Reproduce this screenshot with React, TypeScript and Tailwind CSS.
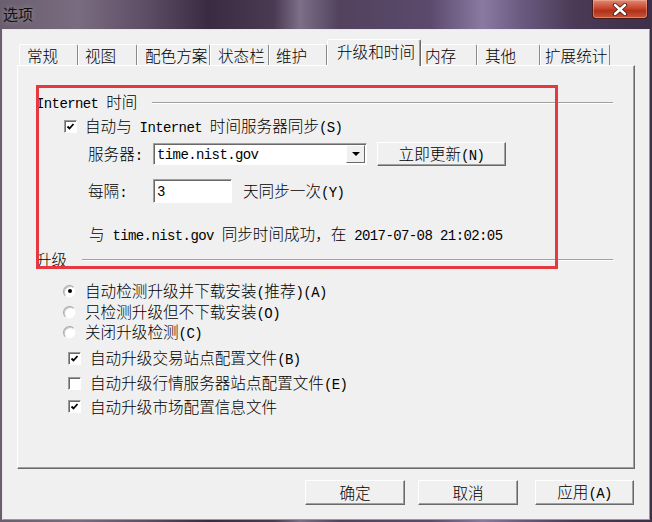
import clsx from "clsx";

// mixed text: CJK runs in Noto Sans CJK, ascii runs in a half-width mono
function Txt({ s, className }: { s: string; className?: string }) {
  const parts = s.match(/[\x00-\x7F]+|[^\x00-\x7F]+/g) ?? [];
  return (
    <span className={clsx("whitespace-pre text-[15.6px] leading-[16px] text-black", className)}>
      {parts.map((p, i) =>
        /^[\x00-\x7F]/.test(p) ? (
          <span key={i} className="font-['Liberation_Mono',monospace] text-[14px] tracking-[-0.6px]">
            {p}
          </span>
        ) : (
          <span key={i} className="font-['Noto_Sans_CJK_SC',sans-serif] font-light">
            {p}
          </span>
        )
      )}
    </span>
  );
}

function Check({ on }: { on?: boolean }) {
  return (
    <span className="flex h-[13px] w-[13px] shrink-0 items-center justify-center border border-[#9a9a9a] border-b-white border-r-white bg-white shadow-[inset_1px_1px_0_#6a6a6a]">
      {on && (
        <svg width="9" height="9" viewBox="0 0 9 9">
          <polyline points="1.5,4.5 3.5,6.5 7.5,2" fill="none" stroke="#000" strokeWidth="1.8" />
        </svg>
      )}
    </span>
  );
}

function Radio({ on }: { on?: boolean }) {
  return (
    <span className="flex h-[13px] w-[13px] shrink-0 items-center justify-center rounded-full border border-[#a8a8a8] border-b-[#f4f4f4] border-r-[#f4f4f4] bg-white shadow-[inset_1px_1px_0_#c8c8c8]">
      {on && <span className="h-[4px] w-[4px] rounded-full bg-black" />}
    </span>
  );
}

function Btn({ label, className }: { label: string; className?: string }) {
  return (
    <div
      className={clsx(
        "flex items-center justify-center border border-[#f0f0f0] border-l-white border-t-white border-b-[#696969] border-r-[#696969] bg-[#f0f0f0] shadow-[inset_-1px_-1px_0_#a0a0a0]",
        className
      )}
    >
      <Txt s={label} />
    </div>
  );
}

function Etch({ className }: { className?: string }) {
  return <div className={clsx("h-[2px] flex-1 border-t border-b border-t-[#a0a0a0] border-b-white", className)} />;
}

const tabs = [
  { label: "常规", cls: "w-[59px] pl-[7px]" },
  { label: "视图", cls: "w-[59px] pl-[6px]" },
  { label: "配色方案", cls: "w-[73px] pl-[7px]" },
  { label: "状态栏", cls: "w-[59px] pl-[7px]" },
  { label: "维护", cls: "w-[58px] pl-[6px]" },
  { label: "升级和时间", cls: "w-[94px] pl-[9px]", active: true },
  { label: "内存", cls: "w-[56px] pl-[3px]" },
  { label: "其他", cls: "w-[63px] pl-[7px]" },
  { label: "扩展统计", cls: "w-[70px] pl-[4px]" }
];

export default function App() {
  return (
    <div className="relative flex h-[522px] w-[652px] flex-col overflow-hidden bg-[linear-gradient(90deg,#6a5e6e_0%,#7a6c80_12%,#5e4e66_22%,#3a2b42_32%,#4a3a52_42%,#7d6f88_46%,#52425e_52%,#5b4a6c_66%,#8a7aa2_74%,#6a5a80_80%,#4a3a56_88%,#3e3048_100%)]">
      {/* title bar */}
      <div className="flex h-[29px] shrink-0 items-start justify-between">
        <span className="mt-[4px] ml-[3px] font-['Noto_Sans_CJK_SC',sans-serif] text-[15px] leading-[20px] text-[#111] [text-shadow:0_0_6px_rgba(255,255,255,0.35)]">
          选项
        </span>
        <div className="mr-[4px] flex h-[19px] w-[56px] items-center justify-center rounded-b-[4px] border border-t-0 border-[#4a1a1a] bg-[linear-gradient(180deg,#e08a74_0%,#c9472e_45%,#b0301a_60%,#c9583a_100%)] shadow-[inset_0_0_0_1px_rgba(255,200,180,0.4)]">
          <svg width="16" height="13" viewBox="0 0 16 13">
            <path d="M3 2 L13 11 M13 2 L3 11" stroke="#4a1410" strokeWidth="4.2" strokeLinecap="round" />
            <path d="M3 2 L13 11 M13 2 L3 11" stroke="#fff" strokeWidth="2.6" strokeLinecap="round" />
          </svg>
        </div>
      </div>

      {/* client */}
      <div className="mx-[2px] mb-[2px] flex flex-1 flex-col border border-[#e8e8e8] border-b-[#9a94a4] border-r-[#9a94a4] bg-[#f0f0f0]">
        {/* tabs */}
        <div className="mt-[10px] flex h-[25px] items-end pl-[16px]">
          {tabs.map((t) =>
            t.active ? (
              <div
                key={t.label}
                className={clsx(
                  "relative z-10 -mb-[1px] flex h-[27px] items-start rounded-t-[2px] border border-b-0 border-l-white border-t-white border-r-[#696969] bg-[#f0f0f0] pt-[3px] shadow-[inset_-1px_0_0_#a0a0a0]",
                  t.cls
                )}
              >
                <Txt s={t.label} />
              </div>
            ) : (
              <div
                key={t.label}
                className={clsx(
                  "flex h-[21px] items-center rounded-t-[2px] border border-b-0 border-l-white border-t-white border-r-[#8a8a8a]",
                  t.cls
                )}
              >
                <Txt s={t.label} />
              </div>
            )
          )}
        </div>

        {/* panel */}
        <div className="ml-[14px] flex h-[404px] w-[618px] flex-col border border-l-white border-t-white border-b-[#696969] border-r-[#696969] pt-[28px] pl-[18px] pr-[21px] shadow-[inset_-1px_-1px_0_#a0a0a0]">
          <div className="flex h-[16px] items-center">
            <Txt s="Internet 时间" />
            <Etch className="mt-[2px] ml-[15px]" />
          </div>
          <div className="mt-[8px] flex h-[16px] items-center pl-[28px]">
            <Check on />
            <Txt className="ml-[8px]" s="自动与 Internet 时间服务器同步(S)" />
          </div>
          <div className="mt-[8px] flex h-[24px] items-center pl-[52px]">
            <div className="w-[65px]">
              <Txt s="服务器:" />
            </div>
            <div className="flex h-[22px] w-[214px] border border-[#a0a0a0] border-b-white border-r-white bg-white shadow-[inset_1px_1px_0_#696969]">
              <div className="flex flex-1 items-center pl-[3px]">
                <Txt s="time.nist.gov" />
              </div>
              <div className="my-[1px] mr-[1px] flex w-[19px] items-center justify-center border border-l-white border-t-white border-b-[#696969] border-r-[#696969] bg-[#f0f0f0]">
                <svg width="8" height="4" viewBox="0 0 8 4">
                  <path d="M0 0 H8 L4 4 Z" fill="#000" />
                </svg>
              </div>
            </div>
            <Btn label="立即更新(N)" className="ml-[10px] h-[24px] w-[129px]" />
          </div>
          <div className="mt-[13px] flex h-[24px] items-center pl-[52px]">
            <div className="w-[65px]">
              <Txt s="每隔:" />
            </div>
            <div className="flex h-[24px] w-[79px] items-center border border-[#a0a0a0] border-b-white border-r-white bg-white pl-[3px] shadow-[inset_1px_1px_0_#696969]">
              <Txt s="3" />
            </div>
            <Txt className="ml-[11px]" s="天同步一次(Y)" />
          </div>
          <div className="mt-[23px] flex h-[16px] items-center pl-[53px]">
            <Txt s="与 time.nist.gov 同步时间成功，在 2017-07-08 21:02:05" />
          </div>
          <div className="mt-[9px] flex h-[16px] items-center">
            <Txt s="升级" />
            <Etch className="mt-[2px] ml-[15px]" />
          </div>
          <div className="mt-[16px] flex h-[16px] items-center pl-[27px]">
            <Radio on />
            <Txt className="ml-[9px]" s="自动检测升级并下载安装(推荐)(A)" />
          </div>
          <div className="mt-[5px] flex h-[16px] items-center pl-[27px]">
            <Radio />
            <Txt className="ml-[9px]" s="只检测升级但不下载安装(O)" />
          </div>
          <div className="mt-[4px] flex h-[16px] items-center pl-[27px]">
            <Radio />
            <Txt className="ml-[9px]" s="关闭升级检测(C)" />
          </div>
          <div className="mt-[10px] flex h-[16px] items-center pl-[32px]">
            <Check on />
            <Txt className="ml-[9px]" s="自动升级交易站点配置文件(B)" />
          </div>
          <div className="mt-[9px] flex h-[16px] items-center pl-[32px]">
            <Check />
            <Txt className="ml-[9px]" s="自动升级行情服务器站点配置文件(E)" />
          </div>
          <div className="mt-[7px] flex h-[16px] items-center pl-[32px]">
            <Check on />
            <Txt className="ml-[9px]" s="自动升级市场配置信息文件" />
          </div>
        </div>

        {/* buttons */}
        <div className="mt-[11px] flex justify-end pr-[15px]">
          <Btn label="确定" className="h-[25px] w-[100px]" />
          <Btn label="取消" className="ml-[13px] h-[25px] w-[100px]" />
          <Btn label="应用(A)" className="ml-[17px] h-[25px] w-[99px]" />
        </div>
      </div>

      {/* red annotation box */}
      <div className="absolute top-[85px] left-[36px] h-[184px] w-[522px] border-[3px] border-[#e5383f]" />
    </div>
  );
}
